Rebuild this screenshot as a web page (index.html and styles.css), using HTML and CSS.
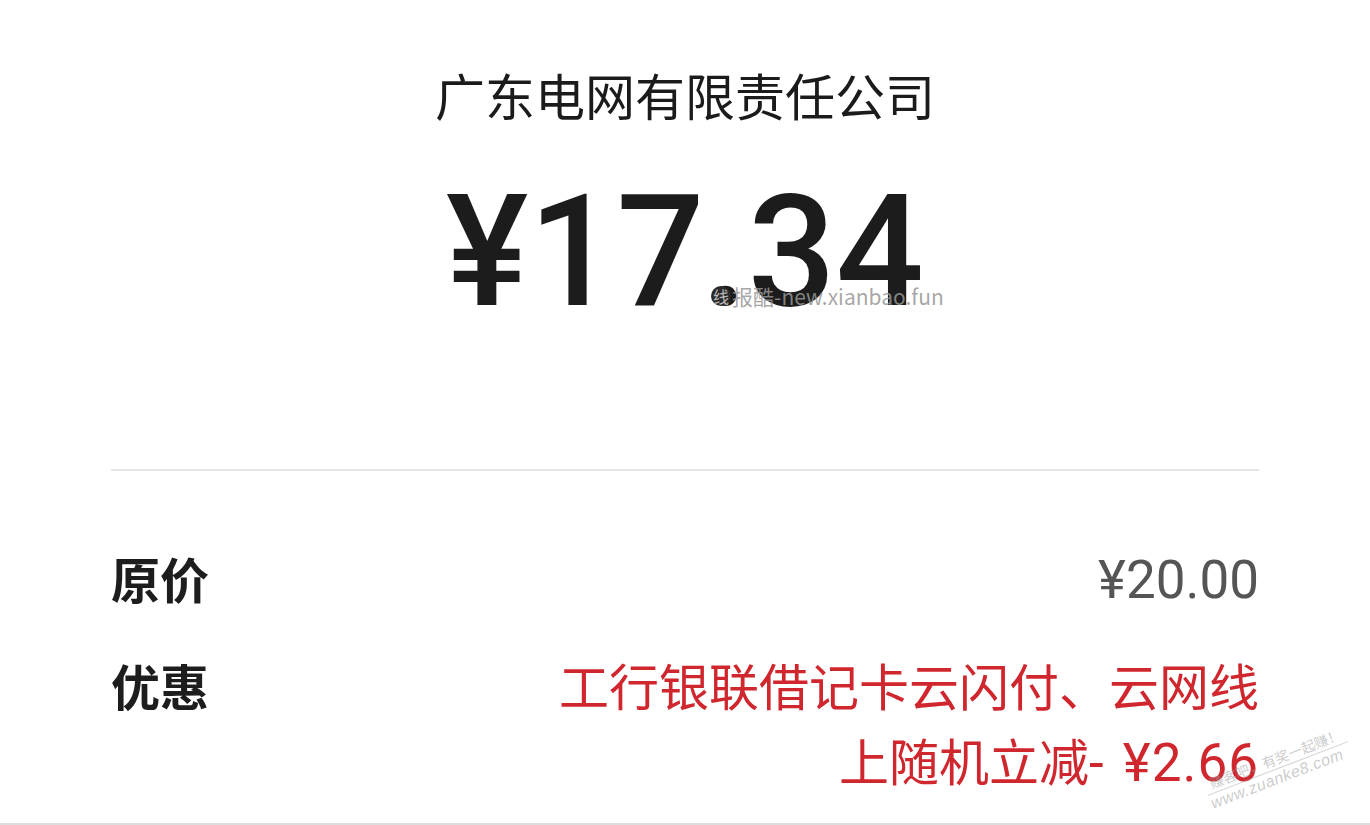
FILE: index.html
```html
<!DOCTYPE html>
<html lang="zh-CN">
<head>
<meta charset="utf-8">
<title>支付详情</title>
<link rel="stylesheet" href="styles.css">
</head>
<body>
<div class="page">
  <header class="head">
    <h1 class="merchant">广东电网有限责任公司</h1>
    <div class="amount-wrap">
      <div class="amount">¥17.34</div>
      <div class="wm-top"><span class="wm-badge">线</span>报酷-new.xianbao.fun</div>
    </div>
  </header>
  <div class="divider"></div>
  <section class="rows">
    <div class="row">
      <div class="label">原价</div>
      <div class="value">¥20.00</div>
    </div>
    <div class="row">
      <div class="label">优惠</div>
      <div class="value red">工行银联借记卡云闪付、云网线<br>上随机立减<span class="num">- ¥2.66</span></div>
      <div class="wm-bottom"><span class="wm-l1">赚客吧，有奖一起赚！</span><span class="wm-l2">www.zuanke8.com</span></div>
    </div>
  </section>
  <div class="bottom-line"></div>
</div>
</body>
</html>
```

FILE: styles.css
```css
html, body {
  margin: 0;
  padding: 0;
  background: #ffffff;
}
body {
  font-family: "Noto Sans CJK SC", "Noto Sans", sans-serif;
  color: #1b1b1b;
}
.page {
  width: 1370px;
  height: 825px;
  display: flex;
  flex-direction: column;
  overflow: hidden;
  position: relative;
}
.head {
  display: flex;
  flex-direction: column;
  align-items: center;
  padding-top: 61px;
}
.merchant {
  margin: 0;
  font-size: 50px;
  font-weight: 400;
  line-height: 66px;
  color: #1b1b1b;
}
.amount-wrap {
  position: relative;
  margin-top: 45px;
}
.amount {
  font-family: Roboto, "Liberation Sans", sans-serif;
  font-weight: 500;
  font-size: 155px;
  line-height: 160px;
  color: #1c1c1c;
}
.wm-top {
  position: absolute;
  left: 265px;
  top: 112px;
  font-family: "Noto Sans CJK SC", "Noto Sans", sans-serif;
  font-size: 21px;
  line-height: 24px;
  color: rgba(150, 150, 150, 0.85);
  white-space: nowrap;
  display: flex;
  align-items: center;
}
.wm-badge {
  display: inline-flex;
  align-items: center;
  justify-content: center;
  width: 20px;
  height: 20px;
  border-radius: 50%;
  background: #2a2a2a;
  color: #bbbbbb;
  font-size: 16px;
  line-height: 20px;
  margin-right: 1px;
}
.divider {
  margin: 137px 111px 0;
  height: 2px;
  background: #e6e6e6;
}
.rows {
  padding: 0 111px;
  display: flex;
  flex-direction: column;
}
.row {
  display: flex;
  justify-content: space-between;
  align-items: flex-start;
  position: relative;
}
.row:first-child {
  margin-top: 69px;
}
.row + .row {
  margin-top: 29px;
}
.label {
  font-size: 49px;
  font-weight: 700;
  line-height: 76px;
  color: #1d1d1d;
}
.value {
  font-family: Roboto, "Noto Sans CJK SC", sans-serif;
  font-size: 53px;
  line-height: 76px;
  color: #555555;
  text-align: right;
  margin-top: 2px;
}
.value.red {
  font-family: "Noto Sans CJK SC", Roboto, sans-serif;
  font-size: 50px;
  line-height: 75px;
  color: #d0262d;
  margin-top: 0;
}
.num {
  font-family: Roboto, "Noto Sans CJK SC", sans-serif;
  font-size: 53px;
  letter-spacing: 1px;
  word-spacing: 4px;
}
.wm-bottom {
  position: absolute;
  right: -94px;
  top: 104px;
  transform: rotate(-21deg);
  display: flex;
  flex-direction: column;
  align-items: flex-start;
  color: rgba(160, 160, 160, 0.55);
  font-family: "Liberation Sans", "Noto Sans CJK SC", sans-serif;
  line-height: 17px;
}
.wm-l1 {
  font-size: 14px;
  border-bottom: 1px solid rgba(170, 170, 170, 0.55);
  padding-left: 6px;
  padding-right: 4px;
}
.wm-l2 {
  font-size: 16px;
  font-style: italic;
  letter-spacing: 0.5px;
}
.bottom-line {
  margin-top: auto;
  height: 2px;
  background: #dddddd;
}
```
